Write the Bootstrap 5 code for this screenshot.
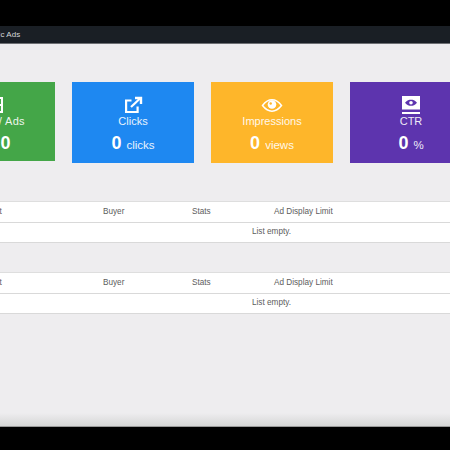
<!DOCTYPE html>
<html lang="en"><head><meta charset="utf-8"><title>Traffic Ads</title>
<link href="https://cdn.jsdelivr.net/npm/bootstrap@5.3.0/dist/css/bootstrap.min.css" rel="stylesheet">
<style>
html,body{height:450px;overflow:hidden;background:#000;font-family:"Liberation Sans",Arial,sans-serif}
.screen{margin-top:26px;height:401px;background:#eeedef;overflow:hidden;position:relative}
.screen::after{content:"";position:absolute;left:0;right:0;bottom:0;height:14px;background:linear-gradient(#eeedef,#d6d6d6);border-bottom:1px solid #999}
.topbar{height:18px;background:#1a1f25;color:#d5d7da;font-size:8px;padding:1px 0 0;border-bottom:1px solid #6d6f73}
.topbar span{margin-left:-18px;letter-spacing:.1px}
.cards{margin:38px 0 0 -67px;width:539px;gap:17px}
.tile{width:122px;height:81px;color:#fff;padding-top:14px;line-height:1}
.tile svg{display:block;height:18px;width:24px}
.tile-label{font-size:11px;height:13px;margin-top:2px;opacity:.9;white-space:nowrap}
.tile-label.wide{letter-spacing:.35px}
.tile-val{font-size:18px;font-weight:700;margin-top:5px;white-space:nowrap;height:20px;word-spacing:-1px}
.tile-val small{font-size:11.500px;font-weight:400;opacity:.9;margin-left:1px}
.t-green{background:#44a648;height:79px}.t-blue{background:#1e88f1}.t-yellow{background:#feb62a}.t-purple{background:#5d34ae}
.grid-t{margin:0 0 0 -67px;width:677px;table-layout:fixed;font-size:8.200px;border-top:1px solid #dedede}
.grid-t td,.grid-t th{padding:0;font-weight:400;border-bottom:1px solid #d9d9d9;vertical-align:middle;background:#fff;color:#5c5c5c;box-shadow:none}
.grid-t th{height:21px}
.grid-t td{height:20px}
.grid-t th:first-child{padding-left:42px}
.g1{margin-top:38px}.g2{margin-top:29px}
.col-a{width:170px}.col-b{width:89px}.col-c{width:82px}
</style></head><body>
<div class="screen">
<nav class="topbar d-flex align-items-center"><span>Traffic Ads</span></nav>
<div class="cards d-flex align-items-start">
 <div class="tile t-green text-center d-flex flex-column align-items-center">
  <svg viewBox="0 0 24 18" fill="none" stroke="#fff" stroke-width="2"><rect x="4" y="2" width="16" height="14"/><path d="M12 2v14M12 9h8"/></svg>
  <div class="tile-label wide">Zones / Ads</div><div class="tile-val">0 / 0</div>
 </div>
 <div class="tile t-blue text-center d-flex flex-column align-items-center">
  <svg viewBox="0 0 24 18" fill="none" stroke="#fff" stroke-width="2.200"><path d="M10.500 4.500H5.100v11.500h11.500v-5.500"/><path d="M10 11 19 2.500"/><path d="M14 2h6v6" stroke-width="2.400"/></svg>
  <div class="tile-label">Clicks</div><div class="tile-val">0 <small>clicks</small></div>
 </div>
 <div class="tile t-yellow text-center d-flex flex-column align-items-center">
  <svg viewBox="0 0 24 18"><path d="M2.500 9.500C6 5 9 3.800 12 3.800s6 1.200 9.500 5.700c-3.500 4.500-6.500 5.700-9.500 5.700s-6-1.200-9.500-5.700Z" fill="none" stroke="#fff" stroke-width="1.500"/><circle cx="12" cy="8.500" r="4.300" fill="#fff"/><circle cx="10.700" cy="7.500" r="1.200" fill="#feb62a"/></svg>
  <div class="tile-label">Impressions</div><div class="tile-val">0 <small>views</small></div>
 </div>
 <div class="tile t-purple text-center d-flex flex-column align-items-center">
  <svg viewBox="0 0 24 18"><rect x="3" y="0" width="18" height="13.500" fill="#fff"/><path d="M6 6.800C8 4.300 10 3.800 12 3.800s4 .5 6 3c-2 2.500-4 3-6 3s-4-.5-6-3Z" fill="#5d34ae"/><circle cx="12" cy="6.800" r="1.800" fill="#fff"/><rect x="3" y="16" width="18" height="2" fill="#fff"/></svg>
  <div class="tile-label">CTR</div><div class="tile-val">0 <small>%</small></div>
 </div>
</div>
<table class="table grid-t g1"><colgroup><col class="col-a"><col class="col-b"><col class="col-c"><col></colgroup>
<thead><tr><th>Ad Unit</th><th>Buyer</th><th>Stats</th><th>Ad Display Limit</th></tr></thead>
<tbody><tr><td colspan="4" class="text-center">List empty.</td></tr></tbody></table>
<table class="table grid-t g2"><colgroup><col class="col-a"><col class="col-b"><col class="col-c"><col></colgroup>
<thead><tr><th>Ad Unit</th><th>Buyer</th><th>Stats</th><th>Ad Display Limit</th></tr></thead>
<tbody><tr><td colspan="4" class="text-center">List empty.</td></tr></tbody></table>
</div>
</body></html>
